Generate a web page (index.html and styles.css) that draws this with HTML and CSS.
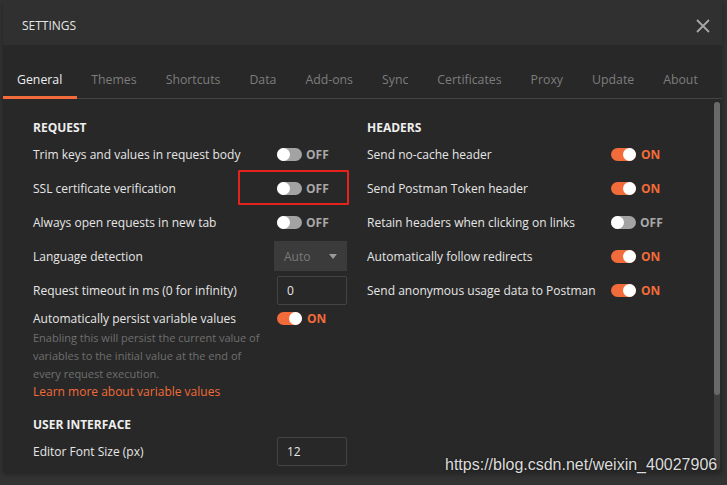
FILE: index.html
```html
<!DOCTYPE html>
<html lang="en">
<head>
  <meta charset="UTF-8">
  <title>Settings</title>
  <link rel="stylesheet" href="styles.css">
</head>
<body>

<div class="modal">
  <!-- Header -->
  <div class="modal-header">
    <span class="modal-title">SETTINGS</span>
    <svg class="close" width="14" height="14" viewBox="0 0 14 14">
      <path d="M1 1L13 13M13 1L1 13" stroke="#a8a8a8" stroke-width="1.8"/>
    </svg>
  </div>

  <!-- Tabs -->
  <div class="tabs">
    <div class="tab active">General</div>
    <div class="tab">Themes</div>
    <div class="tab">Shortcuts</div>
    <div class="tab">Data</div>
    <div class="tab">Add-ons</div>
    <div class="tab">Sync</div>
    <div class="tab">Certificates</div>
    <div class="tab">Proxy</div>
    <div class="tab">Update</div>
    <div class="tab">About</div>
  </div>

  <!-- Settings body -->
  <div class="content">
    <div class="column">
      <div class="heading">REQUEST</div>
      <div class="row">
        <span class="label">Trim keys and values in request body</span>
        <span class="toggle"><span class="track"></span><span class="state">OFF</span></span>
      </div>
      <div class="row">
        <span class="label">SSL certificate verification</span>
        <span class="toggle"><span class="track"></span><span class="state">OFF</span></span>
      </div>
      <div class="row">
        <span class="label">Always open requests in new tab</span>
        <span class="toggle"><span class="track"></span><span class="state">OFF</span></span>
      </div>
      <div class="row">
        <span class="label">Language detection</span>
        <span class="select">Auto <span class="caret"></span></span>
      </div>
      <div class="row">
        <span class="label">Request timeout in ms (0 for infinity)</span>
        <span class="input">0</span>
      </div>
      <div class="row short">
        <span class="label">Automatically persist variable values</span>
        <span class="toggle on"><span class="track"></span><span class="state">ON</span></span>
      </div>
      <div class="help">
        Enabling this will persist the current value of variables to the initial value at the end of every request execution.
      </div>
      <div class="link">Learn more about variable values</div>

      <div class="heading spaced">USER INTERFACE</div>
      <div class="row">
        <span class="label">Editor Font Size (px)</span>
        <span class="input">12</span>
      </div>
    </div>

    <div class="column">
      <div class="heading">HEADERS</div>
      <div class="row">
        <span class="label">Send no-cache header</span>
        <span class="toggle on"><span class="track"></span><span class="state">ON</span></span>
      </div>
      <div class="row">
        <span class="label">Send Postman Token header</span>
        <span class="toggle on"><span class="track"></span><span class="state">ON</span></span>
      </div>
      <div class="row">
        <span class="label">Retain headers when clicking on links</span>
        <span class="toggle"><span class="track"></span><span class="state">OFF</span></span>
      </div>
      <div class="row">
        <span class="label">Automatically follow redirects</span>
        <span class="toggle on"><span class="track"></span><span class="state">ON</span></span>
      </div>
      <div class="row">
        <span class="label">Send anonymous usage data to Postman</span>
        <span class="toggle on"><span class="track"></span><span class="state">ON</span></span>
      </div>
    </div>
  </div>

  <div class="scrollbar"><div class="thumb"></div></div>
</div>

<!-- red annotation around SSL toggle -->
<div class="mark"></div>

<div class="watermark">https://blog.csdn.net/weixin_40027906</div>

</body>
</html>
```

FILE: styles.css
```css
body {
    margin: 0;
    background-color: #333;
    font-family: "Open Sans", "Liberation Sans", sans-serif;
    font-size: 12px;
    color: #e6e6e6;
    height: 485px;
    overflow: hidden;
    position: relative;
}
.modal {
    margin-left: 3px;
    width: 719px;
    height: 472px;
    background-color: #282828;
    box-shadow: 0 2px 6px rgba(0, 0, 0, 0.35);
    position: relative;
    overflow: hidden;
}
.modal-header {
    height: 45px;
    box-sizing: border-box;
    padding: 6px 12px 0 19px;
    background-color: #303030;
    display: flex;
    align-items: center;
    justify-content: space-between;
}
.modal-title {
    font-size: 12px;
    color: #e6e6e6;
}
.tabs {
    display: flex;
    height: 53px;
    align-items: flex-end;
    border-bottom: 1px solid #444;
}
.tab {
    padding: 0 15px 8px 14px;
    font-size: 12.3px;
    white-space: nowrap;
    color: #7d7d7d;
    border-bottom: 3px solid transparent;
    margin-bottom: -1px;
}
.tab.active {
    color: #eeeeee;
    border-bottom-color: #f26b3a;
}
.content {
    display: grid;
    grid-template-columns: 334px 334px;
    padding: 19px 0 0 30px;
}
.heading {
    font-weight: bold;
    height: 19px;
    line-height: 19px;
    color: #eeeeee;
}
.heading.spaced {
    margin-top: 14px;
}
.row {
    display: grid;
    grid-template-columns: 244px auto;
    align-items: center;
    height: 34px;
}
.row.short {
    height: 22px;
}
.label {
    color: #e6e6e6;
}
.toggle {
    display: flex;
    align-items: center;
    gap: 4px;
}
.track {
    width: 25px;
    height: 13px;
    border-radius: 7px;
    background-color: #a3a3a3;
    position: relative;
}
.track::after {
    content: "";
    position: absolute;
    left: 0;
    top: 0;
    width: 13px;
    height: 13px;
    border-radius: 50%;
    background-color: #fff;
}
.toggle.on .track {
    background-color: #f26b3a;
}
.toggle.on .track::after {
    left: 12px;
}
.state {
    font-weight: bold;
    color: #a8a8a8;
}
.toggle.on .state {
    color: #f26b3a;
    margin-left: 1px;
}
.select {
    margin-left: -3px;
    width: 73px;
    height: 30px;
    box-sizing: border-box;
    background-color: #3b3b3b;
    color: #7a7a7a;
    padding: 0 10px;
    display: flex;
    align-items: center;
    justify-content: space-between;
}
.caret {
    width: 0;
    height: 0;
    border-left: 4px solid transparent;
    border-right: 4px solid transparent;
    border-top: 5px solid #9a9a9a;
}
.input {
    width: 70px;
    height: 29px;
    box-sizing: border-box;
    border: 1px solid #444;
    border-radius: 2px;
    padding: 0 9px;
    display: flex;
    align-items: center;
    color: #e6e6e6;
}
.help {
    width: 232px;
    font-size: 11px;
    line-height: 18px;
    color: #6f6f6f;
}
.link {
    font-size: 12px;
    line-height: 18px;
    color: #f26b3a;
}
.scrollbar {
    position: absolute;
    right: 2px;
    top: 102px;
    width: 6px;
    height: 368px;
    background-color: #3e3e3e;
    border-radius: 3px;
}
.thumb {
    height: 293px;
    background-color: #696969;
    border-radius: 3px;
}
.mark {
    position: absolute;
    left: 238px;
    top: 170px;
    width: 107px;
    height: 31px;
    border: 2px solid #e3231c;
    border-radius: 1px;
}
.watermark {
    position: absolute;
    left: 445px;
    top: 456px;
    font-family: "Liberation Sans", Arial, sans-serif;
    font-size: 16px;
    color: #dcdcdc;
    text-shadow: 0 0 2px rgba(0, 0, 0, 0.6);
}
```
